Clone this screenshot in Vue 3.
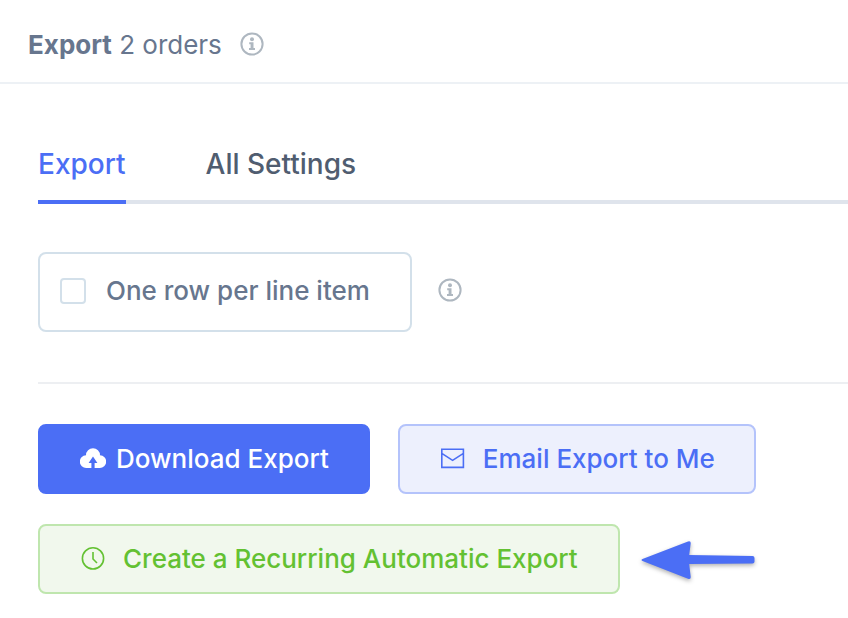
<template>
  <div class="export-panel">
    <header class="panel-header">
      <h1><strong>Export</strong> {{ orderCount }} orders</h1>
      <svg class="info" viewBox="0 1 24 24" aria-hidden="true">
        <circle cx="12" cy="12" r="10.6" />
        <circle class="fill" cx="12" cy="7.2" r="2" />
        <path class="fill" d="M9.2 10.2h4.3V16H15v2H9v-2h1.6v-3.8H9.2z" />
      </svg>
    </header>

    <main>
      <nav class="tabs">
        <button
          v-for="tab in tabs"
          :key="tab"
          type="button"
          class="tab"
          :class="{ active: tab === activeTab }"
          @click="activeTab = tab"
        >
          {{ tab }}
        </button>
      </nav>

      <section class="options">
        <label class="option">
          <input v-model="rowPerItem" type="checkbox" />
          <span>One row per line item</span>
        </label>
        <svg class="info" viewBox="0 2 24 24" aria-hidden="true">
          <circle cx="12" cy="12" r="10.6" />
          <circle class="fill" cx="12" cy="7.2" r="2" />
          <path class="fill" d="M9.2 10.2h4.3V16H15v2H9v-2h1.6v-3.8H9.2z" />
        </svg>
      </section>

      <section class="actions">
        <div class="action-row">
          <button type="button" class="btn primary">
            <svg viewBox="0 1 26 26" aria-hidden="true">
              <path d="M6.4 23A6.4 6.4 0 0 1 6 10.2a7 7 0 0 1 14 0A6.4 6.4 0 0 1 19.6 23h-5v-5h2.8L13 11.4 8.6 18h2.8v5z" />
            </svg>
            <span>Download Export</span>
          </button>
          <button type="button" class="btn email">
            <svg viewBox="0 1 26 26" aria-hidden="true">
              <path d="M1.8 4.2h21.6v18.2H1.8zM1.8 8.4l10.8 7 10.8-7" />
            </svg>
            <span>Email Export to Me</span>
          </button>
        </div>
        <div class="action-row">
          <button type="button" class="btn recurring">
            <svg viewBox="0 1 26 26" aria-hidden="true">
              <circle cx="13" cy="13.4" r="10.6" />
              <path d="M13 7v7l4 4" />
            </svg>
            <span>Create a Recurring Automatic Export</span>
          </button>
          <svg class="arrow" viewBox="0 -1 116 44" aria-hidden="true">
            <path d="M2.5 21 48 3.4q3-1 2.7 2L49.2 17l63.3 1q2 0 2 2v3.5q0 2-2 2L49.2 26l1.5 12.7q.3 3-2.7 2L2.5 23q-2-1 0-2z" />
          </svg>
        </div>
      </section>
    </main>
  </div>
</template>

<script setup>
import { ref } from 'vue';

const orderCount = ref(2);
const tabs = ['Export', 'All Settings'];
const activeTab = ref('Export');
const rowPerItem = ref(false);
</script>

<style>
body {
  background: #ffffff;
}
</style>

<style scoped>
.export-panel {
  font-family: Inter, "Liberation Sans", sans-serif;
  font-size: 26px;
  line-height: 32px;
  color: #67768e;
}

.panel-header {
  display: flex;
  align-items: center;
  gap: 18px;
  padding: 29px 28px 21px;
  border-bottom: 2px solid #edf1f5;
}

h1 {
  margin: 0;
  font-size: 26px;
  font-weight: 400;
}

strong {
  font-weight: 700;
}

.info {
  width: 24px;
  height: 24px;
  overflow: visible;
  fill: none;
  stroke: #aeb7c0;
  stroke-width: 2;
}

.info .fill {
  fill: #aeb7c0;
  stroke: none;
}

main {
  padding-left: 38px;
}

.tabs {
  display: flex;
  gap: 80px;
  margin-top: 64px;
  box-shadow: inset 0 -4px #dfe4ec;
}

button {
  font: inherit;
  font-weight: 500;
  cursor: pointer;
}

.tab {
  padding: 0 0 20px;
  border: none;
  border-bottom: 4px solid transparent;
  background: none;
  color: #505d70;
  font-size: 28px;
}

.tab.active {
  border-color: #4b6ef5;
  color: #4b6ef5;
}

.options {
  display: flex;
  align-items: center;
  gap: 26px;
  padding: 48px 0 50px;
  border-bottom: 2px solid #edeff2;
}

.option {
  display: flex;
  align-items: center;
  gap: 20px;
  padding: 21px 40px 23px 20px;
  border: 2px solid #d3e0ea;
  border-radius: 8px;
  font-weight: 500;
  cursor: pointer;
}

.option input {
  appearance: none;
  width: 26px;
  height: 26px;
  margin: 0;
  border: 2px solid #d3e0ea;
  border-radius: 4px;
  background: #ffffff;
}

.option input:checked {
  border-color: #4b6ef5;
  background: #4b6ef5;
}

.actions {
  display: flex;
  flex-direction: column;
  gap: 30px;
  padding: 40px 0 24px;
}

.action-row {
  display: flex;
  align-items: center;
  gap: 28px;
}

.btn {
  display: flex;
  align-items: center;
  gap: 17px;
  padding: 17px 40px;
  border: 2px solid;
  border-radius: 8px;
  white-space: nowrap;
}

.btn svg {
  width: 26px;
  height: 26px;
  fill: none;
  stroke: currentColor;
  stroke-width: 1.6;
}

.primary {
  gap: 10px;
  padding-right: 39px;
  border-color: #4b6ef5;
  background: #4b6ef5;
  color: #ffffff;
}

.primary svg {
  fill: currentColor;
  stroke: none;
}

.email {
  padding-right: 39px;
  border-color: #b4c3fb;
  background: #edf0fd;
  color: #4b6ef5;
}

.recurring {
  border-color: #bfe6ae;
  background: #f1f8ed;
  color: #63c132;
}

.recurring + .arrow {
  margin-left: -8px;
}

.arrow {
  width: 116px;
  height: 44px;
  fill: #4b6ef5;
  filter: drop-shadow(0 2px 2px rgba(0, 0, 0, 0.3));
}
</style>
